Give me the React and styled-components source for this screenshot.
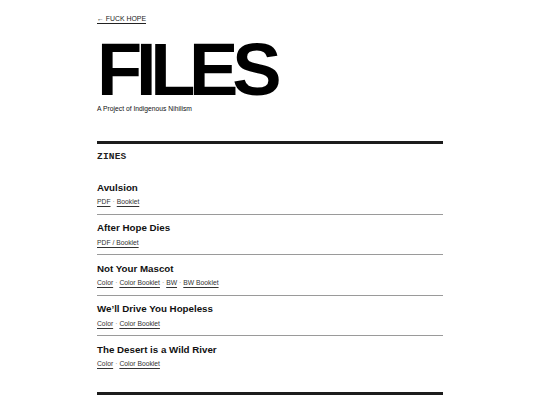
import React from "react";
import styled, { createGlobalStyle } from "styled-components";

const Global = createGlobalStyle`
  html, body { margin: 0; padding: 0; background: #fff; }
  body { font-family: "Liberation Sans", Arial, sans-serif; color: #111; }
`;

const Page = styled.main`
  width: 346px;
  margin: 0 auto;
  padding-top: 13.5px;
`;

const Nav = styled.nav`
  font-size: 6.9px;
  line-height: 9px;
`;

const BackLink = styled.a`
  color: #222;
  text-decoration: underline;
  text-decoration-thickness: 0.7px;
  text-underline-offset: 1.5px;
`;

const Title = styled.h1`
  margin: 19.1px 0 0;
  font-size: 74px;
  line-height: 0.75;
  font-weight: 700;
  letter-spacing: -0.085em;
  color: #000;
`;

const Subtitle = styled.p`
  margin: 7.4px 0 0;
  font-size: 6.75px;
  line-height: 9px;
  color: #111;
`;

const Rule = styled.hr`
  margin: ${(p) => p.$mt}px 0 0;
  border: 0;
  border-top: 3px solid #1c1c1c;
  height: 0;
`;

const SectionHead = styled.h2`
  margin: 7.5px 0 11px;
  font-family: "Liberation Mono", "Courier New", monospace;
  font-weight: 700;
  font-size: 9.5px;
  line-height: 12px;
  letter-spacing: 0.2px;
  color: #222;
`;

const List = styled.ul`
  list-style: none;
  margin: 0;
  padding: 0;
`;

const Item = styled.li`
  padding: 7.6px 0 7.4px;
  border-bottom: 1px solid #9a9a9a;
  &:last-child { border-bottom: 0; }
`;

const ItemTitle = styled.h3`
  margin: 0;
  font-size: 9.75px;
  line-height: 12px;
  font-weight: 700;
  color: #111;
`;

const Links = styled.div`
  margin-top: 3.4px;
  font-size: 6.75px;
  line-height: 9px;
  color: #666;
`;

const FileLink = styled.a`
  color: #333;
  text-decoration: underline;
  text-decoration-color: #333;
  text-decoration-thickness: 0.7px;
  text-underline-offset: 1.5px;
`;

const Sep = styled.span`
  color: #888;
  margin: 0 2px;
`;

const zines = [
  { title: "Avulsion", links: ["PDF", "Booklet"] },
  { title: "After Hope Dies", links: ["PDF / Booklet"] },
  { title: "Not Your Mascot", links: ["Color", "Color Booklet", "BW", "BW Booklet"] },
  { title: "We\u2019ll Drive You Hopeless", links: ["Color", "Color Booklet"] },
  { title: "The Desert is a Wild River", links: ["Color", "Color Booklet"] },
];

export default function App() {
  return (
    <>
      <Global />
      <Page>
        <Nav>
          <BackLink href="#">← FUCK HOPE</BackLink>
        </Nav>
        <Title>FILES</Title>
        <Subtitle>A Project of Indigenous Nihilism</Subtitle>
        <Rule $mt={27.5} />
        <SectionHead>ZINES</SectionHead>
        <List>
          {zines.map((z) => (
            <Item key={z.title}>
              <ItemTitle>{z.title}</ItemTitle>
              <Links>
                {z.links.map((l, i) => (
                  <React.Fragment key={l}>
                    {i > 0 && <Sep>·</Sep>}
                    <FileLink href="#">{l}</FileLink>
                  </React.Fragment>
                ))}
              </Links>
            </Item>
          ))}
        </List>
        <Rule $mt={17} />
      </Page>
    </>
  );
}
